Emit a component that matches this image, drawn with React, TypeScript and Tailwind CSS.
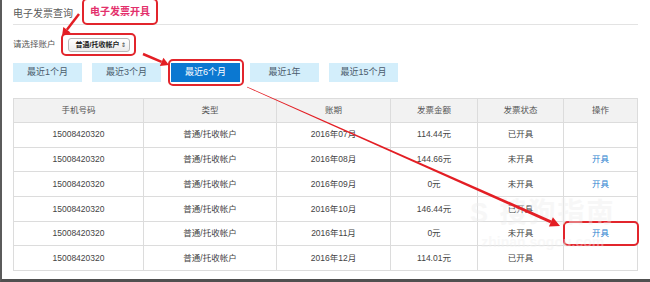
import React from "react";

const rows = [
  { month: "2016年07月", amount: "114.44元", status: "已开具", op: "" },
  { month: "2016年08月", amount: "144.66元", status: "未开具", op: "开具" },
  { month: "2016年09月", amount: "0元", status: "未开具", op: "开具" },
  { month: "2016年10月", amount: "146.44元", status: "已开具", op: "" },
  { month: "2016年11月", amount: "0元", status: "未开具", op: "开具", boxed: true },
  { month: "2016年12月", amount: "114.01元", status: "已开具", op: "" },
];

const ranges = ["最近1个月", "最近3个月", "最近6个月", "最近1年", "最近15个月"];

export default function App() {
  return (
    <div
      className="relative w-[650px] h-[282px] overflow-hidden bg-white border-l-2 border-l-[#5b5b5b] border-b-[3px] border-b-[#505050] pl-[11px] pr-[11px]"
      style={{ fontFamily: '"Liberation Sans", "Noto Sans CJK SC", sans-serif' }}
    >
      {/* title row */}
      <div className="flex items-center h-[25px] border-b border-[#e3e3e3] w-[625px]">
        <span className="text-[10px] text-[#5a5a5a] leading-none mt-[3px]">电子发票查询</span>
        <span className="ml-[9px] -mt-[2px] h-[27px] w-[76px] flex items-center justify-center border-2 border-[#e2252c] rounded-[5px] text-[10px] font-bold text-[#e3306c]">
          电子发票开具
        </span>
      </div>

      {/* account select */}
      <div className="flex items-center mt-[8px] h-[23px]">
        <span className="text-[8.5px] text-[#555]">请选择账户</span>
        <div className="ml-[5px] h-[23px] w-[75px] border-2 border-[#e2252c] rounded-[5px] flex items-center pl-[5px]">
          <div className="h-[14px] w-[62px] rounded-[3px] border border-[#b8b8b8] bg-gradient-to-b from-white to-[#ececec] flex items-center justify-between pl-[7px] pr-[3px]">
            <span className="text-[7px] font-bold text-[#222] leading-none">普通/托收帐户</span>
            <span className="text-[6px] text-[#333] leading-none">⇕</span>
          </div>
        </div>
      </div>

      {/* range buttons */}
      <div className="flex gap-[10px] mt-[7px] h-[19px]">
        {ranges.map((r, i) => (
          <div key={r} className="relative">
            <button
              className={
                "h-[19px] w-[69px] text-[9px] flex items-center justify-center " +
                (i === 2 ? "bg-[#0b78d1] text-white" : "bg-[#d3eefb] text-[#4a5b6c]")
              }
            >
              {r}
            </button>
            {i === 2 && (
              <span className="absolute -left-[3px] -top-[4px] w-[76px] h-[27px] border-2 border-[#e2252c] rounded-[5px]" />
            )}
          </div>
        ))}
      </div>

      {/* table */}
      <table className="mt-[16px] w-[624px] border-collapse table-fixed text-[8.5px] text-[#444]">
        <colgroup>
          <col className="w-[130px]" />
          <col className="w-[133px]" />
          <col className="w-[114px]" />
          <col className="w-[87px]" />
          <col className="w-[86px]" />
          <col className="w-[74px]" />
        </colgroup>
        <thead>
          <tr className="h-[24px] bg-[#f2f2f2]">
            {["手机号码", "类型", "账期", "发票金额", "发票状态", "操作"].map((h) => (
              <th key={h} className="border border-[#dcdcdc] font-normal text-[#555]">
                {h}
              </th>
            ))}
          </tr>
        </thead>
        <tbody>
          {rows.map((r) => (
            <tr key={r.month} className="h-[24.7px] text-center">
              <td className="border border-[#dcdcdc]">15008420320</td>
              <td className="border border-[#dcdcdc]">普通/托收帐户</td>
              <td className="border border-[#dcdcdc]">{r.month}</td>
              <td className="border border-[#dcdcdc]">{r.amount}</td>
              <td className="border border-[#dcdcdc]">{r.status}</td>
              <td className="relative border border-[#dcdcdc] text-[#2b7fcf]">
                {r.op}
                {r.boxed && (
                  <span className="absolute -left-[1px] -right-[2px] -top-[1px] -bottom-[1px] border-2 border-[#e2252c] rounded-[5px]" />
                )}
              </td>
            </tr>
          ))}
        </tbody>
      </table>

      {/* faint watermark */}
      <div className="absolute left-[468px] top-[200px] flex flex-col items-center pointer-events-none opacity-40">
        <span className="text-[27px] leading-none font-bold text-[#ececec] tracking-[2px]">S 搜狗指南</span>
        <span className="mt-[8px] text-[14px] leading-none font-bold text-[#efefef]">zhinan.sogou.com</span>
      </div>

      {/* annotation arrows */}
      <svg className="absolute -left-[2px] top-0 pointer-events-none" width="650" height="282">
        <line x1="79" y1="14" x2="66.9" y2="29.7" stroke="#e31e24" strokeWidth="2.5" />
        <polygon points="62,36 70.5,32.4 63.3,27" fill="#e31e24" />
        <line x1="143" y1="54" x2="161.6" y2="61.9" stroke="#e31e24" strokeWidth="2.5" />
        <polygon points="169,65 159.8,66 163.4,57.8" fill="#e31e24" />
        <polygon points="247.16,86.63 551.5,220.5 550.3,223.3 246.84,87.37" fill="#e31e24" />
        <polygon points="560,226 548.9,226.5 552.9,217.3" fill="#e31e24" />
      </svg>
    </div>
  );
}
